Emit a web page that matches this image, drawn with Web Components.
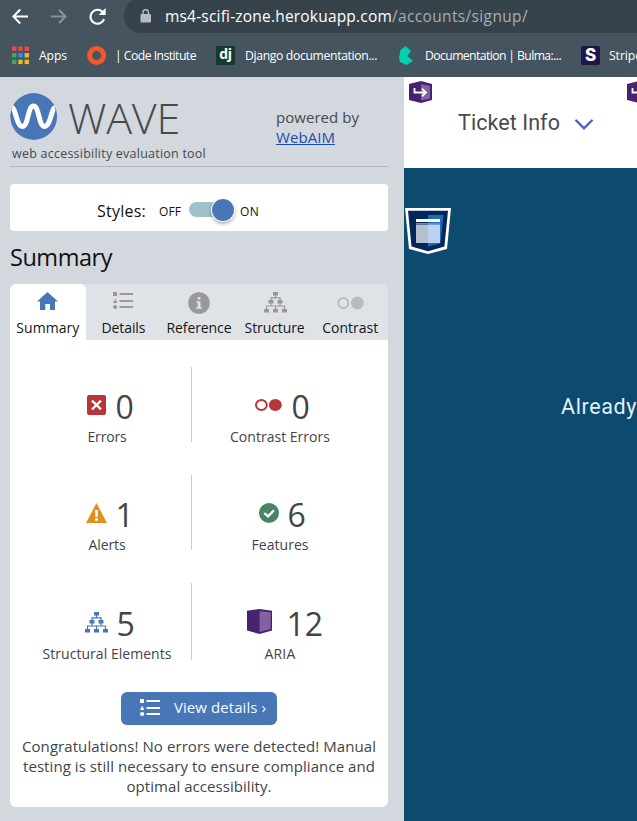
<!DOCTYPE html>
<html lang="en"><head><meta charset="utf-8"><title>WAVE report</title>
<style>html,body{margin:0;width:637px;height:821px;overflow:hidden}body{font-family:"Open Sans","Noto Sans",sans-serif}</style></head>
<body><audit-window></audit-window>
<script>
const define = (name, html, after) => customElements.define(name, class extends HTMLElement {
  connectedCallback() {
    if (this.shadowRoot) return;
    const t = document.createElement('template');
    t.innerHTML = typeof html === 'function' ? html(this) : html;
    this.attachShadow({mode: 'open'}).append(t.content.cloneNode(true));
    if (after) after(this);
  }
});

const list = '<rect x="0" y="0" width="4" height="4"/><path d="M0 11L2.2 6.8L4.4 11zM6.5 1h13.5v2H6.5zM6.5 8h13.5v2H6.5zM6.5 14h13.5v2H6.5z"/><circle cx="2.1" cy="15" r="2.1"/>';
const tree = '<path d="M9 0h5v3.5H9zM4.5 8h5v3.5h-5zM13.5 8h5v3.5h-5zM0 17h5v3.5H0zM9 17h5v3.5H9zM18 17h5v3.5h-5z"/><path d="M11.5 3v2.8M7 8.5V5.8h9v2.7M7 11v3M16 11v3M2.5 17.5V14h18v3.5M11.5 14v3.5" fill="none" stroke="currentColor"/>';
const badge = '<path d="M0 3L12 0L23 3V19L12 22L0 19z" fill="#48226f"/><path d="M12 3.2L21 4.8V17.6L12 19.5z" fill="#8162a0"/>';
const icons = {
  back: [20,20,'<path d="M17 9.5H3M9.2 2.5L2.4 9.5L9.2 16.5" fill="none" stroke="#fff" stroke-width="2"/>'],
  forward: [20,20,'<path d="M0 9.5H15M8 3L14.5 9.5L8 16" fill="none" stroke="#87929a" stroke-width="2"/>'],
  reload: [20,20,'<path d="M15.1 12.2A7 7 0 1 1 13.5 4.8" fill="none" stroke="#fff" stroke-width="2.1"/><path d="M16.6 1V8H9.6z" fill="#fff"/>'],
  lock: [12,14,'<rect x=".5" y="5" width="10.5" height="8.5" rx="1" fill="#b8bac8"/><path d="M3 5.5V3.5a2.7 2.7 0 0 1 5.4 0v2" fill="none" stroke="#b8bac8" stroke-width="1.4"/>'],
  apps: [18,19,[['#e84b45','#e84b45','#e84b45'],['#45a460','#2c91ee','#efb82c'],['#45a460','#efb82c','#efb82c']].map((r,j)=>r.map((c,i)=>`<rect x="${i*6.3}" y="${.5+j*6.6}" width="4.4" height="4.4" fill="${c}"/>`).join('')).join('')],
  ring: [20,20,'<circle cx="9.6" cy="9.5" r="7" fill="none" stroke="#f1592a" stroke-width="5"/>'],
  bulma: [14,19,'<path d="M6.5 0L12 5L8.5 10L14 15L7.5 19L1 16L0 12L1.5 4z" fill="#00d1b2"/>'],
  wave: [48,48,'<circle cx="23.7" cy="23.5" r="23.4" fill="#4877b8"/><path d="M2.2 14.5C5.5 15 6.5 33.5 12.4 33.5C18.5 33.5 17.6 13 23.5 13C29.4 13 28.5 33.5 34.6 33.5C40.5 33.5 41.6 15 44.9 14.5" fill="none" stroke="#fff" stroke-width="5"/>'],
  home: [22,19,'<path fill="currentColor" d="M10.5 0L21 9.5H18V18H13V12H8.3V18H3V9.5H0z"/>'],
  list: [21,18,`<g fill="currentColor">${list}</g>`],
  tree: [23,21,`<g fill="currentColor">${tree}</g>`],
  info: [22,22,'<circle cx="11" cy="11" r="10.8" fill="currentColor"/><path d="M9.6 5h2.8v2.6H9.6zM8.5 9.3h3.9v5.6h1.2v1.8H8.4v-1.8h1.3v-3.8H8.5z" fill="#dfe2e7"/>'],
  dots: [27,14,'<circle cx="6.3" cy="7" r="5" fill="none" stroke="currentColor" stroke-width="2"/><circle cx="20.4" cy="7" r="6.4" fill="currentColor"/>'],
  contrast: [27,12,'<ellipse cx="6.4" cy="6" rx="5.4" ry="4.9" fill="none" stroke="#b93638" stroke-width="2"/><ellipse cx="20.3" cy="6" rx="6.5" ry="6" fill="#b93638"/>'],
  error: [19,20,'<rect width="19" height="20" rx="2" fill="#b93638"/><path d="M5 5.6L14 14.4M14 5.6L5 14.4" stroke="#fff" stroke-width="2.2"/>'],
  alert: [21,20,'<path d="M10.5 0L21 20H0z" fill="#de911f"/><path d="M9 7h3l-.5 7h-2zM9.1 15.3h2.8v2.5H9.1z" fill="#fff"/>'],
  check: [20,20,'<circle cx="10" cy="10" r="10" fill="#478564"/><path d="M5.3 10L9 13.3L15 7.2" fill="none" stroke="#fff" stroke-width="2.3"/>'],
  aria: [25,25,'<path d="M0 1.7L12.6 0L25 1.7V21.5L12.6 25L0 21.5z" fill="#48226f"/><path d="M12.6 2.3L23.7 3.3V20L12.6 23z" fill="#8162a0"/>'],
  badge: [23,22,badge+'<path d="M5.5 7V11.5H16M13 7.7L17 11.5L13 15.4" fill="none" stroke="#fff" stroke-width="1.8"/>'],
  main: [46,46,'<path d="M0 0H46L42 41L23 46L4 41z" fill="#fff"/><path d="M3 2.8H43L39.4 38.6L23 43.2L6.5 38.6z" fill="#03265b"/><path d="M23 7H38.5L35.5 35.5L23 38.5z" fill="#2268bd"/><path d="M11 16.5H23V35H11z" fill="#b5bfd2"/><path d="M23 16.5H35V35H23z" fill="#bed2ee"/><path d="M11 11H35V14H11z" fill="#fff"/><path d="M11 15H35v1H11z" fill="#7189b2"/>'],
  chevron: [18,12,'<path d="M1.2 1.5L9 9.3L16.8 1.5" fill="none" stroke="#485fc7" stroke-width="2.3" stroke-linecap="round"/>']
};
define('ui-icon', e => { const [w,h,b] = icons[e.getAttribute('name')];
  return `<style>:host{display:block;flex:none}svg{display:block}</style><svg width="${w}" height="${h}" viewBox="0 0 ${w} ${h}" stroke-width="1.2">${b}</svg>`; });

/* A single line whose tracking is adjusted to a given width. */
define('track-text', '<style>:host{display:block;white-space:nowrap;flex:none}span{display:inline-block;white-space:pre;text-decoration:var(--line,none)}</style><span><slot></slot></span>', e => {
  const s = e.shadowRoot.querySelector('span'), w = +e.getAttribute('w');
  if (w) s.style.letterSpacing = (w - s.getBoundingClientRect().width) / e.textContent.length + 'px';
});

define('browser-bar', `<style>
:host{display:block;height:77px;background:#45545e;color:#fff;overflow:hidden}
.nav{display:flex;height:33px}.nav ui-icon{margin-top:7px}
.b{margin-left:11px}.f{margin-left:20px}.r{margin-left:18px}
.url{display:flex;margin-left:15px;flex:1;background:#37434b;border-radius:17px 0 0 17px;height:35px;margin-top:-2px;line-height:33px;font-size:15.5px;padding:2px 0 0 16px;box-sizing:border-box}
.url ui-icon{margin:9px 13px 0 0}.path{color:#a7aeb4}
.marks{display:grid;grid-template-columns:27px 48px 28px 101px 29px 154px 26px 156px 28px 40px;padding:0 0 0 12px;height:44px;align-items:center;font-size:12.2px;line-height:44px}
.marks track-text{padding-top:1px}
.dj,.s{width:19px;height:19px;background:#123c30;font-weight:700;font-size:14px;line-height:16px;text-align:center;letter-spacing:-.2px}
.s{background:#1d164b;border-radius:2px;font-size:17px;line-height:18px;font-family:"Inter",sans-serif;font-weight:800}
</style><div class="nav"><ui-icon class="b" name="back"></ui-icon><ui-icon class="f" name="forward"></ui-icon><ui-icon class="r" name="reload"></ui-icon>
<div class="url"><ui-icon name="lock"></ui-icon><track-text w="227">ms4-scifi-zone.herokuapp.com</track-text><track-text class="path" w="136">/accounts/signup/</track-text></div></div>
<div class="marks"><ui-icon name="apps"></ui-icon><track-text w="28">Apps</track-text><ui-icon name="ring"></ui-icon><track-text w="81">| Code Institute</track-text><div class="dj">dj</div><track-text w="132">Django documentation...</track-text><ui-icon name="bulma"></ui-icon><track-text w="136">Documentation | Bulma:...</track-text><div class="s">S</div><track-text w="33">Stripe</track-text></div>`);

define('wave-header', `<style>
:host{display:grid;grid-template-columns:266px 1fr;height:89px;border-bottom:1px solid #b0b4bf;color:#464a4d}
.brand{display:flex;height:63px}.brand ui-icon{margin:16px 10px 0 0}
.word{font-weight:300;font-size:43px;line-height:50px;margin-top:16px}
.tag{font-size:12.5px;line-height:16px;margin:6px 0 0 2px}
.by{font-size:15px;line-height:20px;padding-top:30px}a{color:#184faf;--line:underline}
</style><div><div class="brand"><ui-icon name="wave"></ui-icon><track-text class="word" w="112">WAVE</track-text></div><track-text class="tag" w="194">web accessibility evaluation tool</track-text></div>
<div class="by"><track-text w="83">powered by</track-text><a><track-text w="59">WebAIM</track-text></a></div>`);

define('style-switch', `<style>
:host{display:flex;height:47px;margin-top:17px;background:#fff;border-radius:4px;line-height:54px;font-size:16px;color:#111;padding-left:87px;box-sizing:border-box}
.o{font-size:12px;line-height:55px;margin-left:13px}.n{margin-left:6px;font-size:12px;line-height:55px}
.track{height:15px;border-radius:8px;margin:18px 0 0 8px;padding-left:23px;box-sizing:border-box;width:45px;background:linear-gradient(90deg,#9fc1ca 36px,transparent 36px)}
.knob{width:22px;height:22px;margin-top:-3px;border-radius:50%;background:#4877b8;box-shadow:0 0 0 1px #fff,0 2px 4px #0007}
</style><track-text w="49">Styles:</track-text><track-text class="o" w="22">OFF</track-text><div class="track"><div class="knob"></div></div><track-text class="n" w="19">ON</track-text>`);

define('tab-item', e => `<style>
:host{display:flex;flex-direction:column;align-items:center;color:#999;width:75.6px}
:host([active]){background:#fff;color:#4877b8;border-radius:6px 6px 0 0}
.i{height:33px;display:flex;align-items:flex-start;padding:${e.getAttribute('top')}px 0 0 1px;box-sizing:border-box}
track-text{font-size:14px;line-height:22px;color:#151515}
</style><div class="i"><ui-icon name="${e.getAttribute('icon')}"></ui-icon></div><track-text w="${e.getAttribute('w')}">${e.getAttribute('label')}</track-text>`);

define('stat-item', e => `<style>
:host{display:block;height:75px;box-sizing:border-box;color:#424548}
.v{display:flex;height:60px;padding-left:${e.getAttribute('lead')}px}
ui-icon{margin-top:${e.getAttribute('top')}px;color:#4877b8}
.n{font-size:32px;line-height:50px;margin:15px 0 0 ${e.getAttribute('gap')}px}
.l{font-size:14px;line-height:20px;text-align:center}
</style><div class="v"><ui-icon name="${e.getAttribute('icon')}"></ui-icon><track-text class="n">${e.getAttribute('value')}</track-text></div><track-text class="l" w="${e.getAttribute('w')}">${e.getAttribute('label')}</track-text>`);

define('summary-panel', `<style>
:host{display:block;height:523px;background:#fff;border-radius:6px;overflow:hidden;color:#424548}
.tabs{display:flex;height:56px;background:#dfe2e7}
.stats{display:grid;grid-template-columns:168px 177px;grid-template-rows:75px 75px 76px;row-gap:33px;padding:27px 0 0 13.5px}
.stats>:nth-child(odd){border-right:1px solid #ccc;margin:0 0 0 -13px;padding-left:13px}
.stats>:nth-child(n+5){height:77px;padding-top:1px}
.btn{display:flex;width:156px;height:33px;margin:33px auto 0 111px;background:#4877b8;border-radius:6px;color:#f7faff;font-size:15px;line-height:31px}
.btn ui-icon{margin:7px 13px 0 19px;color:#fff}
.msg{font-size:15px;line-height:20px;margin-top:11px;display:flex;flex-direction:column;align-items:center}
</style>
<div class="tabs"><tab-item active icon="home" top="8" label="Summary" w="63"></tab-item><tab-item icon="list" top="8" label="Details" w="44"></tab-item><tab-item icon="info" top="8" label="Reference" w="65"></tab-item><tab-item icon="tree" top="8" label="Structure" w="60"></tab-item><tab-item icon="dots" top="12" label="Contrast" w="56" style="color:#bbb"></tab-item></div>
<div class="stats">
<stat-item icon="error" value="0" label="Errors" w="39" lead="63" top="28" gap="10"></stat-item><stat-item icon="contrast" value="0" label="Contrast Errors" w="100" lead="63" top="32" gap="10"></stat-item>
<stat-item icon="alert" value="1" label="Alerts" w="37" lead="62" top="28" gap="9"></stat-item><stat-item icon="check" value="6" label="Features" w="57" lead="67" top="28" gap="9"></stat-item>
<stat-item icon="tree" value="5" label="Structural Elements" w="129" lead="61" top="28" gap="9"></stat-item><stat-item icon="aria" value="12" label="ARIA" w="31" lead="55" top="25" gap="15"></stat-item></div>
<div class="btn"><ui-icon name="list"></ui-icon><track-text w="92">View details ›</track-text></div>
<div class="msg"><track-text w="354">Congratulations! No errors were detected! Manual</track-text><track-text w="352">testing is still necessary to ensure compliance and</track-text><track-text w="145">optimal accessibility.</track-text></div>`);

define('wave-sidebar', `<style>
:host{display:block;width:404px;background:#d3d7de;padding:0 16px 0 10px;box-sizing:border-box}
h2{font-weight:400;font-size:23.5px;line-height:34px;margin:9px 0 10px;color:#111}
</style><wave-header></wave-header><style-switch></style-switch><h2><track-text w="102">Summary</track-text></h2><summary-panel></summary-panel>`);

define('site-page', `<style>
:host{display:block;position:relative;flex:1;overflow:hidden;background:#0d4b6e}
.top{height:91px;background:#fff;color:#4a4a4a;display:flex;padding-left:54px;box-sizing:border-box;font:21.5px/92px Roboto,sans-serif}
.top ui-icon{margin:42px 0 0 15px}
.mark{position:absolute;left:5px;top:4px}.m2{left:223px}.m3{left:1px;top:131px}
.al{font:21.5px/30px Roboto,sans-serif;color:#dff1fa;margin:224px 0 0 157px}
</style><div class="top"><track-text w="102">Ticket Info</track-text><ui-icon name="chevron"></ui-icon></div>
<track-text class="al" w="76">Already</track-text>
<ui-icon class="mark" name="badge"></ui-icon><ui-icon class="mark m2" name="badge"></ui-icon><ui-icon class="mark m3" name="main"></ui-icon>`);

define('audit-window', `<style>:host{display:block;width:637px;height:821px;overflow:hidden}.body{display:flex;height:744px}</style>
<browser-bar></browser-bar><div class="body"><wave-sidebar></wave-sidebar><site-page></site-page></div>`);
</script></body></html>
